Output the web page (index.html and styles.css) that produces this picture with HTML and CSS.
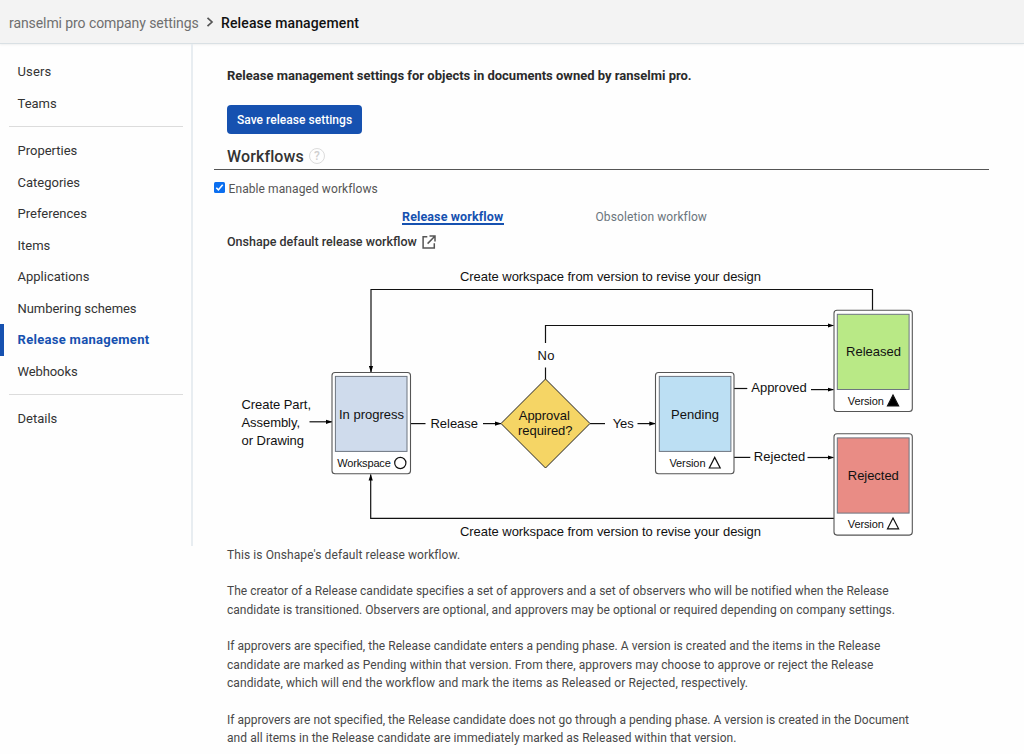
FILE: index.html
```html
<!DOCTYPE html>
<html lang="en">
<head>
<meta charset="utf-8">
<title>Release management</title>
<link rel="stylesheet" href="styles.css">
</head>
<body>
<header class="topbar">
  <a class="crumb">ranselmi pro company settings</a>
  <svg class="crumb-sep" width="8" height="10" viewBox="0 0 8 10"><path d="M1.5 .8 6 5 1.5 9.2"/></svg>
  <span class="crumb-current">Release management</span>
</header>
<div class="layout">
  <nav class="sidebar">
    <a class="item i-users">Users</a>
    <a class="item">Teams</a>
    <hr class="divider">
    <a class="item">Properties</a>
    <a class="item">Categories</a>
    <a class="item">Preferences</a>
    <a class="item">Items</a>
    <a class="item">Applications</a>
    <a class="item i-long">Numbering schemes</a>
    <a class="item active">Release management</a>
    <a class="item i-webhooks">Webhooks</a>
    <hr class="divider">
    <a class="item">Details</a>
  </nav>
  <main class="content">
    <h1 class="title">Release management settings for objects in documents owned by ranselmi pro.</h1>
    <button class="save" type="button">Save release settings</button>
    <div class="section-head">
      <h2 class="section-title">Workflows</h2>
      <span class="help">?</span>
    </div>
    <label class="enable">
      <svg class="check" width="11" height="11" viewBox="0 0 11 11"><rect width="11" height="11" rx="1.5" fill="#0b6ff0"/><path d="M2.3 5.8 4.4 7.9 8.7 2.8" fill="none" stroke="#fff" stroke-width="1.6"/></svg>
      <span class="enable-text">Enable managed workflows</span>
    </label>
    <div class="tabs">
      <a class="tab tab-active">Release workflow</a>
      <a class="tab tab-other">Obsoletion workflow</a>
    </div>
    <div class="flow-name">
      <span class="flow-text">Onshape default release workflow</span>
      <svg class="ext" width="14" height="14" viewBox="0 0 14 14"><path d="M5.3 1.7H1.1V13H12.3V8.3M7.5 1.1H13V6.4M12.8 1.3 5.6 8.6"/></svg>
    </div>
    <svg class="diagram" width="700" height="280" viewBox="227 262 700 280">
      <defs>
        <marker id="arrow" markerUnits="userSpaceOnUse" markerWidth="7" markerHeight="5" refX="6" refY="2.5" orient="auto"><path d="M0 .4 6.5 2.5 0 4.6z"/></marker>
      </defs>
      <g class="wire">
        <path d="M872.5 310V289.5H371V372" marker-end="url(#arrow)"/>
        <path d="M834 518.4H370.7V474.5" marker-end="url(#arrow)"/>
        <path d="M309.5 421.8H332" marker-end="url(#arrow)"/>
        <path d="M410.5 423.6H425.5"/>
        <path d="M483 423.6H501" marker-end="url(#arrow)"/>
        <path d="M545.5 379V367.5"/>
        <path d="M545.5 343V325.5H833.5" marker-end="url(#arrow)"/>
        <path d="M590 423.6H605"/>
        <path d="M637.5 423.6H655.3" marker-end="url(#arrow)"/>
        <path d="M734 388.5H747.3"/>
        <path d="M811 389.6H833.5" marker-end="url(#arrow)"/>
        <path d="M734 457.4H750.3"/>
        <path d="M807.5 457.5H833.5" marker-end="url(#arrow)"/>
      </g>
      <path class="decision" d="M545.5 379 590 423.5 545.5 468 501 423.5z"/>
      <g class="card">
        <rect x="332" y="372.5" width="78.5" height="101.3" rx="3"/>
        <rect x="655.5" y="372.5" width="78.5" height="101.3" rx="3"/>
        <rect x="834" y="310.2" width="78.3" height="101.3" rx="3"/>
        <rect x="834" y="433.8" width="78.3" height="101.3" rx="3"/>
      </g>
      <g class="face">
        <rect x="335.4" y="376.4" width="71.6" height="75" fill="#cfdbec"/>
        <rect x="659.3" y="376.4" width="71.6" height="75" fill="#bcdff3"/>
        <rect x="837.3" y="314.3" width="71.8" height="75.2" fill="#b9e986"/>
        <rect x="837.3" y="437.9" width="71.8" height="75.2" fill="#e98c85"/>
      </g>
      <g class="mark">
        <circle cx="400.3" cy="463" r="5.6"/>
        <path d="M714.7 457.4 720.2 468H709.3z"/>
        <path d="M893 395 898.6 405.9H887.5z" fill="#000"/>
        <path d="M893 518 898.6 528.8H887.5z"/>
      </g>
      <g class="label">
        <text x="460" y="280.7" textLength="301">Create workspace from version to revise your design</text>
        <text x="460" y="535.8" textLength="301">Create workspace from version to revise your design</text>
        <text x="241.5" y="409" textLength="69.5">Create Part,</text>
        <text x="241.5" y="427" textLength="58.5">Assembly,</text>
        <text x="241.5" y="445" textLength="62.5">or Drawing</text>
        <text x="339" y="418.7" textLength="65">In progress</text>
        <text x="430.5" y="428" textLength="47.5">Release</text>
        <text x="518.8" y="420" textLength="51">Approval</text>
        <text x="518" y="434.5" textLength="54.5">required?</text>
        <text x="537.5" y="360" textLength="17">No</text>
        <text x="612.7" y="428" textLength="21">Yes</text>
        <text x="671" y="418.7" textLength="48">Pending</text>
        <text x="751.3" y="392.4" textLength="55.5">Approved</text>
        <text x="753.8" y="460.7" textLength="51.5">Rejected</text>
        <text x="846" y="356.4" textLength="55">Released</text>
        <text x="847.8" y="480.2" textLength="51">Rejected</text>
      </g>
      <g class="label small">
        <text x="337.3" y="467" textLength="53.5">Workspace</text>
        <text x="669.5" y="467" textLength="36">Version</text>
        <text x="847.8" y="405" textLength="36">Version</text>
        <text x="847.8" y="528" textLength="36">Version</text>
      </g>
    </svg>
    <div class="notes">
      <p class="note"><span class="n1">This is Onshape's default release workflow.</span></p>
      <p class="note"><span class="n2">The creator of a Release candidate specifies a set of approvers and a set of observers who will be notified when the Release</span><br><span class="n3">candidate is transitioned. Observers are optional, and approvers may be optional or required depending on company settings.</span></p>
      <p class="note"><span class="n4">If approvers are specified, the Release candidate enters a pending phase. A version is created and the items in the Release</span><br><span class="n5">candidate are marked as Pending within that version. From there, approvers may choose to approve or reject the Release</span><br><span class="n6">candidate, which will end the workflow and mark the items as Released or Rejected, respectively.</span></p>
      <p class="note"><span class="n7">If approvers are not specified, the Release candidate does not go through a pending phase. A version is created in the Document</span><br><span class="n8">and all items in the Release candidate are immediately marked as Released within that version.</span></p>
    </div>
  </main>
</div>
</body>
</html>
```
FILE: styles.css
```css
* { box-sizing: border-box; }
body {
  margin: 0;
  height: 754px;
  overflow: hidden;
  background: #fefefe;
  color: #333;
  font-family: Roboto, "Liberation Sans", sans-serif;
  font-size: 13px;
}
a, span, h1, h2, button { white-space: nowrap; }
.topbar {
  display: flex;
  align-items: center;
  height: 44px;
  padding: 1px 0 0 9px;
  background: #f3f3f3;
  border-bottom: 1px solid #d9e0e4;
  box-shadow: 0 1px 2px rgba(0, 0, 0, .06);
}
.crumb { width: 190px; padding-top: 1px; font-size: 14px; letter-spacing: -.08px; color: #6f6f6f; }
.crumb-sep { margin: 0 7px; fill: none; stroke: #555; stroke-width: 1.7; }
.crumb-current { padding-top: 1px; font-size: 14px; font-weight: 500; letter-spacing: .13px; color: #111; }
.layout { display: flex; }
.sidebar {
  width: 193px;
  height: 502px;
  padding-top: 12.25px;
  border-right: 2px solid #e8edf1;
}
.item {
  display: flex;
  align-items: center;
  height: 31.5px;
  padding: 0 0 1px 17.5px;
  font-size: 13px;
}
.i-users { letter-spacing: .15px; }
.i-long { letter-spacing: -.05px; }
.i-webhooks { letter-spacing: -.1px; }
.active {
  padding-left: 13.5px;
  border-left: 4px solid #1651b0;
  color: #1651b0;
  font-weight: 700;
  letter-spacing: .3px;
}
.divider { height: 1px; margin: 7px 8px 8px 9px; border: 0; background: #dcdcdc; }
.content { width: 775px; margin-left: 21px; }
.title { margin: 23px 0 0 13px; font-size: 13px; line-height: 18px; font-weight: 700; color: #2b2b2b; }
.save {
  display: block;
  width: 135px;
  height: 29px;
  margin: 20px 0 0 13px;
  padding: 1px 0 0;
  border: 0;
  border-radius: 4px;
  background: #1651b0;
  color: #fff;
  font: 500 12px Roboto, "Liberation Sans", sans-serif;
  letter-spacing: .04px;
}
.section-head {
  display: flex;
  align-items: center;
  height: 36px;
  padding: 9px 0 0 13px;
  border-bottom: 1px solid #555;
}
.section-title { width: 77px; margin: 1px 5px 0 0; font-size: 16px; font-weight: 500; line-height: 20px; letter-spacing: .12px; }
.help {
  width: 16px;
  height: 16px;
  border: 1.5px solid #dcdcdc;
  border-radius: 50%;
  color: #cfcfcf;
  font-size: 12px;
  font-weight: 500;
  line-height: 14px;
  text-align: center;
}
.enable { display: flex; height: 38px; padding-top: 12px; }
.enable-text { margin: 0 0 0 3.5px; line-height: 15px; font-size: 12px; letter-spacing: .09px; color: #555; }
.tabs { display: flex; height: 24px; padding-left: 188px; }
.tab { height: 17px; line-height: 17px; }
.tab-active { width: 102px; margin-right: 91.5px; border-bottom: 2px solid #1651b0; color: #1651b0; font-weight: 700; font-size: 12.5px; letter-spacing: .12px; }
.tab-other { padding-top: 1px; color: #6b757d; font-size: 12px; letter-spacing: .1px; }
.flow-name { display: flex; align-items: center; height: 20px; padding-left: 13px; font-weight: 500; font-size: 12.5px; }
.flow-text { width: 190px; margin-right: 5px; padding-bottom: 2px; }
.ext { fill: none; stroke: #555; stroke-width: 1.5; }
.diagram { display: block; margin: 10px 0 0 13px; overflow: visible; }
.wire { fill: none; stroke: #111; stroke-width: 1.2; }
marker path { stroke: none; fill: #000; }
.decision { fill: #f5d565; stroke: #222; stroke-width: 1; }
.card { fill: #fff; stroke: #555; stroke-width: 1.1; }
.face { stroke: #6d7580; stroke-width: 1; }
.mark { fill: none; stroke: #111; stroke-width: 1.2; }
.label { font-family: "Liberation Sans", sans-serif; font-size: 13px; fill: #111; }
.small { font-size: 11px; }
.notes { padding: 3.6px 0 0 13px; }
.note { margin: 0 0 18.2px; line-height: 18.4px; font-size: 12px; color: #484848; }
.n1 { letter-spacing: .09px; }
.n2 { letter-spacing: .02px; }
.n3 { letter-spacing: .032px; }
.n4 { letter-spacing: .033px; }
.n5 { letter-spacing: .056px; }
.n6 { letter-spacing: .087px; }
.n7 { letter-spacing: .01px; }
.n8 { letter-spacing: .057px; }
```
